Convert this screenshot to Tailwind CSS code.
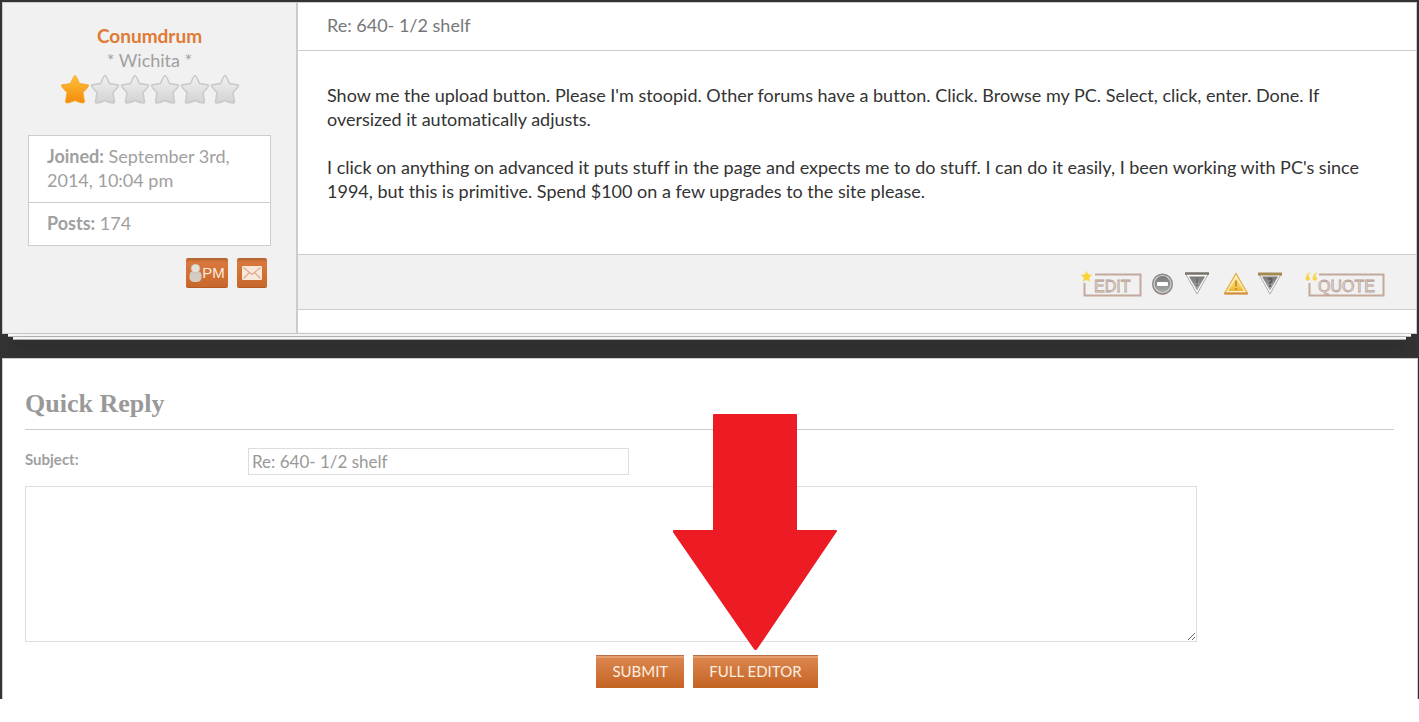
<!DOCTYPE html>
<html lang="en">
<head>
<meta charset="utf-8">
<title>Re: 640- 1/2 shelf</title>
<script src="https://cdn.jsdelivr.net/npm/@tailwindcss/browser@4"></script>
</head>
<body class="bg-white font-['Lato',sans-serif] text-[18px] leading-6 text-[#a0a0a0] [font-variant-ligatures:none]">
<svg class="absolute size-0" aria-hidden="true">
  <defs>
    <linearGradient id="gold" x1="0" y1="0" x2="0" y2="1"><stop offset="0" stop-color="#fcc33a"/><stop offset="1" stop-color="#f58a0b"/></linearGradient>
    <linearGradient id="silver" x1="0" y1="0" x2="0" y2="1"><stop offset="0" stop-color="#f2f2f2"/><stop offset="1" stop-color="#d2d2d2"/></linearGradient>
    <linearGradient id="steel" x1="0" y1="0" x2="0" y2="1"><stop offset="0" stop-color="#777"/><stop offset="1" stop-color="#aaa"/></linearGradient>
    <linearGradient id="amber" x1="0" y1="0" x2="0" y2="1"><stop offset="0" stop-color="#fdeb9c"/><stop offset="1" stop-color="#f3b52c"/></linearGradient>
    <path id="star" d="M15 1.500Q16 1.500 19.500 9.500L28.500 11Q29.500 12 23 18.500L24.500 28Q24 30.500 15 26.500Q6 30.500 5.500 28L7 18.500Q.5 12 1.500 11L10.500 9.500Q14 1.500 15 1.500Z" stroke-linejoin="round"/>
  </defs>
</svg>
<main class="bg-[#333] pt-[2px] pl-[2px]">
  <article class="mr-[2px]">
    <div class="flex bg-white border border-[#ccc]">
      <aside class="w-[295px] shrink-0 bg-[#f1f1f1] border-r-2 border-[#ccc] pt-[21px] pb-[45px] pl-[25px] pr-[25px]">
        <div class="text-center">
          <a href="#" class="block text-[19px] font-bold text-[#e07a35]">Conumdrum</a>
          <p>* Wichita *</p>
          <svg class="mx-auto mt-[2px]" width="180" height="31" viewBox="0 0 180 31" role="img" aria-label="Rank: one star of six">
            <use href="#star" fill="url(#gold)" stroke="#f7a72a"/>
            <g fill="url(#silver)" stroke="#c8c8c8" stroke-width="1.500"><use href="#star" x="30"/><use href="#star" x="60"/><use href="#star" x="90"/><use href="#star" x="120"/><use href="#star" x="150"/></g>
          </svg>
        </div>
        <dl class="mt-[30px] bg-white border border-[#ccc] divide-y divide-[#ccc]">
          <div class="px-[18px] pt-2 pb-[10px]"><dt class="inline font-bold">Joined:</dt> <dd class="inline">September 3rd, 2014, 10:04 pm</dd></div>
          <div class="px-[18px] pt-2 pb-[10px]"><dt class="inline font-bold">Posts:</dt> <dd class="inline">174</dd></div>
        </dl>
        <div class="mt-3 mr-1 flex justify-end gap-[9px]">
          <button aria-label="Private message" class="flex h-[30px] w-[42px] items-center justify-center rounded-[2px] border-b border-[#b65a22] bg-gradient-to-b from-[#b06030] via-[#d9773c] via-15% to-[#c9682c] text-[15px] font-['Liberation_Sans',sans-serif] text-[#fbeade]">
            <svg width="13" height="20" viewBox="0 0 13 20"><rect x="0.500" y="8" width="12" height="11" rx="4.500" fill="#d4cbc2"/><circle cx="6.500" cy="5.500" r="4.500" fill="#e6e0d9" stroke="#b9a392" stroke-width=".6"/></svg>PM
          </button>
          <button aria-label="E-mail" class="flex h-[30px] w-[30px] items-center justify-center rounded-[2px] border-b border-[#b65a22] bg-gradient-to-b from-[#b06030] via-[#d9773c] via-15% to-[#c9682c]">
            <svg width="20" height="14" viewBox="0 0 20 14"><rect width="20" height="14" rx="1" fill="#f8e8dc"/><path d="M1.500 1.500 10 8.500 18.500 1.500M1.500 12.500 7.500 6.500M18.500 12.500 12.500 6.500" fill="none" stroke="#dba888" stroke-width="1.100"/></svg>
          </button>
        </div>
      </aside>
      <div class="min-w-0 flex-1">
        <h3 class="border-b border-[#ccc] pl-[29px] pt-[10px] pb-[13px] text-[#777]">Re: 640- 1/2 shelf</h3>
        <div class="px-[29px] pt-8 pb-[51px] text-[#333]">
          <p>Show me the upload button. Please I'm stoopid. Other forums have a button. Click. Browse my PC. Select, click, enter. Done. If<br>oversized it automatically adjusts.</p>
          <p class="mt-6">I click on anything on advanced it puts stuff in the page and expects me to do stuff. I can do it easily, I been working with PC's since<br>1994, but this is primitive. Spend $100 on a few upgrades to the site please.</p>
        </div>
        <div class="flex h-14 items-center justify-end border-y border-[#ccc] bg-[#f1f1f1] pr-[31px] pt-1">
          <button aria-label="Edit"><svg width="61" height="28" viewBox="0 0 61 28"><path d="M14 4.500H59.500V25.500H3.500V13" fill="none" stroke="#c3a99c" stroke-width="2"/><path d="m5.500 1 1.500 3.300 4 .6-2.900 2.800.8 4-3.400-1.900-3.400 1.900.8-4L0 4.900l4-.6Z" fill="#fbd238" stroke="#f6e08a" stroke-width=".6"/><text x="13" y="21.500" font-family="Liberation Sans" font-size="16" fill="#f3ece8" stroke="#b7a196" stroke-width=".8">EDIT</text></svg></button>
          <button aria-label="Delete" class="ml-[9px]"><svg width="23" height="24" viewBox="0 0 23 24"><circle cx="11.500" cy="13" r="10" fill="#db8a80"/><circle cx="11.500" cy="12" r="10.500" fill="#8c8c8c"/><circle cx="11.500" cy="12" r="8.500" fill="url(#steel)" stroke="#d0d0d0" stroke-width="1.200"/><rect x="6" y="10" width="11" height="4" rx="1" fill="#fff"/></svg></button>
          <button aria-label="Report this post" class="ml-[10px]"><svg width="26" height="24" viewBox="0 0 26 24"><path d="M1.500 1.500H24.500L13 22Z" fill="#fafafa" stroke="#aaa" stroke-linejoin="round"/><path d="M1 1.500H25" stroke="#77736b" stroke-width="2.500"/><path d="M5 4.500H21L13 18.500Z" fill="url(#steel)"/><path d="M13 6.500V11M13 12.500V14" stroke="#6c6c6c" stroke-width="2"/></svg></button>
          <button aria-label="Warn user" class="ml-[13px]"><svg width="26" height="24" viewBox="0 0 26 24"><path d="M13 1.500 24.500 21.500H1.500Z" fill="#fff2cc" stroke="#e3b34f" stroke-width="1.500" stroke-linejoin="round"/><path d="M1.500 21.500H24.500" stroke="#d38a3d" stroke-width="2"/><path d="M13 5.500 21 19H5Z" fill="url(#amber)"/><path d="M13 8.500V14.500M13 16V18" stroke="#c7952d" stroke-width="2.200"/></svg></button>
          <button aria-label="Information" class="ml-2"><svg width="26" height="24" viewBox="0 0 26 24"><path d="M1.500 1.500H24.500L13 22Z" fill="#fafafa" stroke="#aaa" stroke-linejoin="round"/><path d="M1 2H25" stroke="#a1894f" stroke-width="3"/><path d="M5 4.500H21L13 18.500Z" fill="url(#steel)"/><path d="M11 7.500Q13 5.500 15 7.500Q15 9.500 13 10.500V12M13 13V15" fill="none" stroke="#555" stroke-width="1.500"/></svg></button>
          <button aria-label="Quote" class="ml-[22px]"><svg width="80" height="28" viewBox="0 0 80 28"><path d="M14 4.500H78.500V25.500H4.500V13" fill="none" stroke="#c3a99c" stroke-width="2"/><path d="M5 2.500Q1 4 1 8V9.500A2 2 0 1 0 3 6.500Q3 4.500 5 2.500ZM12 2.500Q8 4 8 8V9.500A2 2 0 1 0 10 6.500Q10 4.500 12 2.500Z" fill="#fbd238" stroke="#f6d768" stroke-width=".8"/><text x="13" y="21.500" font-family="Liberation Sans" font-size="16" fill="#f3ece8" stroke="#b7a196" stroke-width=".8">QUOTE</text></svg></button>
        </div>
      </div>
    </div>
    <div class="mx-[6px] h-[3px] border-b border-[#bbb] bg-white"></div>
    <div class="mx-[11px] h-[3px] border-b border-[#aaa] bg-[#f5f5f5] shadow-[0_6px_12px_#222]"></div>
  </article>

  <form class="relative mt-[18px] mr-px border border-b-0 border-[#ccc] bg-white pt-[30px] pr-[23px] pb-[11px] pl-[22px]">
    <h2 class="border-b border-[#ccc] pb-[10px] font-['Liberation_Serif',serif] text-[26px] font-bold leading-[30px] text-[#999]">Quick Reply</h2>
    <div class="mt-[18px] flex">
      <label for="subject" class="w-[223px] text-[15px] font-bold leading-[22px]">Subject:</label>
      <input id="subject" type="text" value="Re: 640- 1/2 shelf" class="h-[27px] w-[381px] border border-[#ddd] px-[3px] text-[17px] text-[#999]">
    </div>
    <textarea aria-label="Message" class="mt-[11px] block h-[156px] w-[1172px] max-w-full resize border border-[#ddd]"></textarea>
    <div class="mt-[13px] flex justify-center gap-[9px] pr-[5px] text-[15px] text-[#fdeee0]">
      <button type="button" class="h-[33px] border-t border-[#b87040] bg-gradient-to-b from-[#dc8850] to-[#c46321] px-4 pb-[2px] shadow-[inset_0_2px_0_#e6a070]">SUBMIT</button>
      <div class="relative">
        <button type="button" class="h-[33px] border-t border-[#b87040] bg-gradient-to-b from-[#dc8850] to-[#c46321] px-4 pb-[2px] shadow-[inset_0_2px_0_#e6a070]">FULL EDITOR</button>
        <svg class="pointer-events-none absolute bottom-full left-1/2 mb-[5px] -translate-x-1/2" width="164" height="236" viewBox="0 0 164 236"><path d="M41 1H123V117H163L83 235H82L1 118V117H41Z" fill="#ed1c24" stroke="#ed1c24" stroke-width="2" stroke-linejoin="round"/></svg>
      </div>
    </div>
  </form>
</main>
</body>
</html>
